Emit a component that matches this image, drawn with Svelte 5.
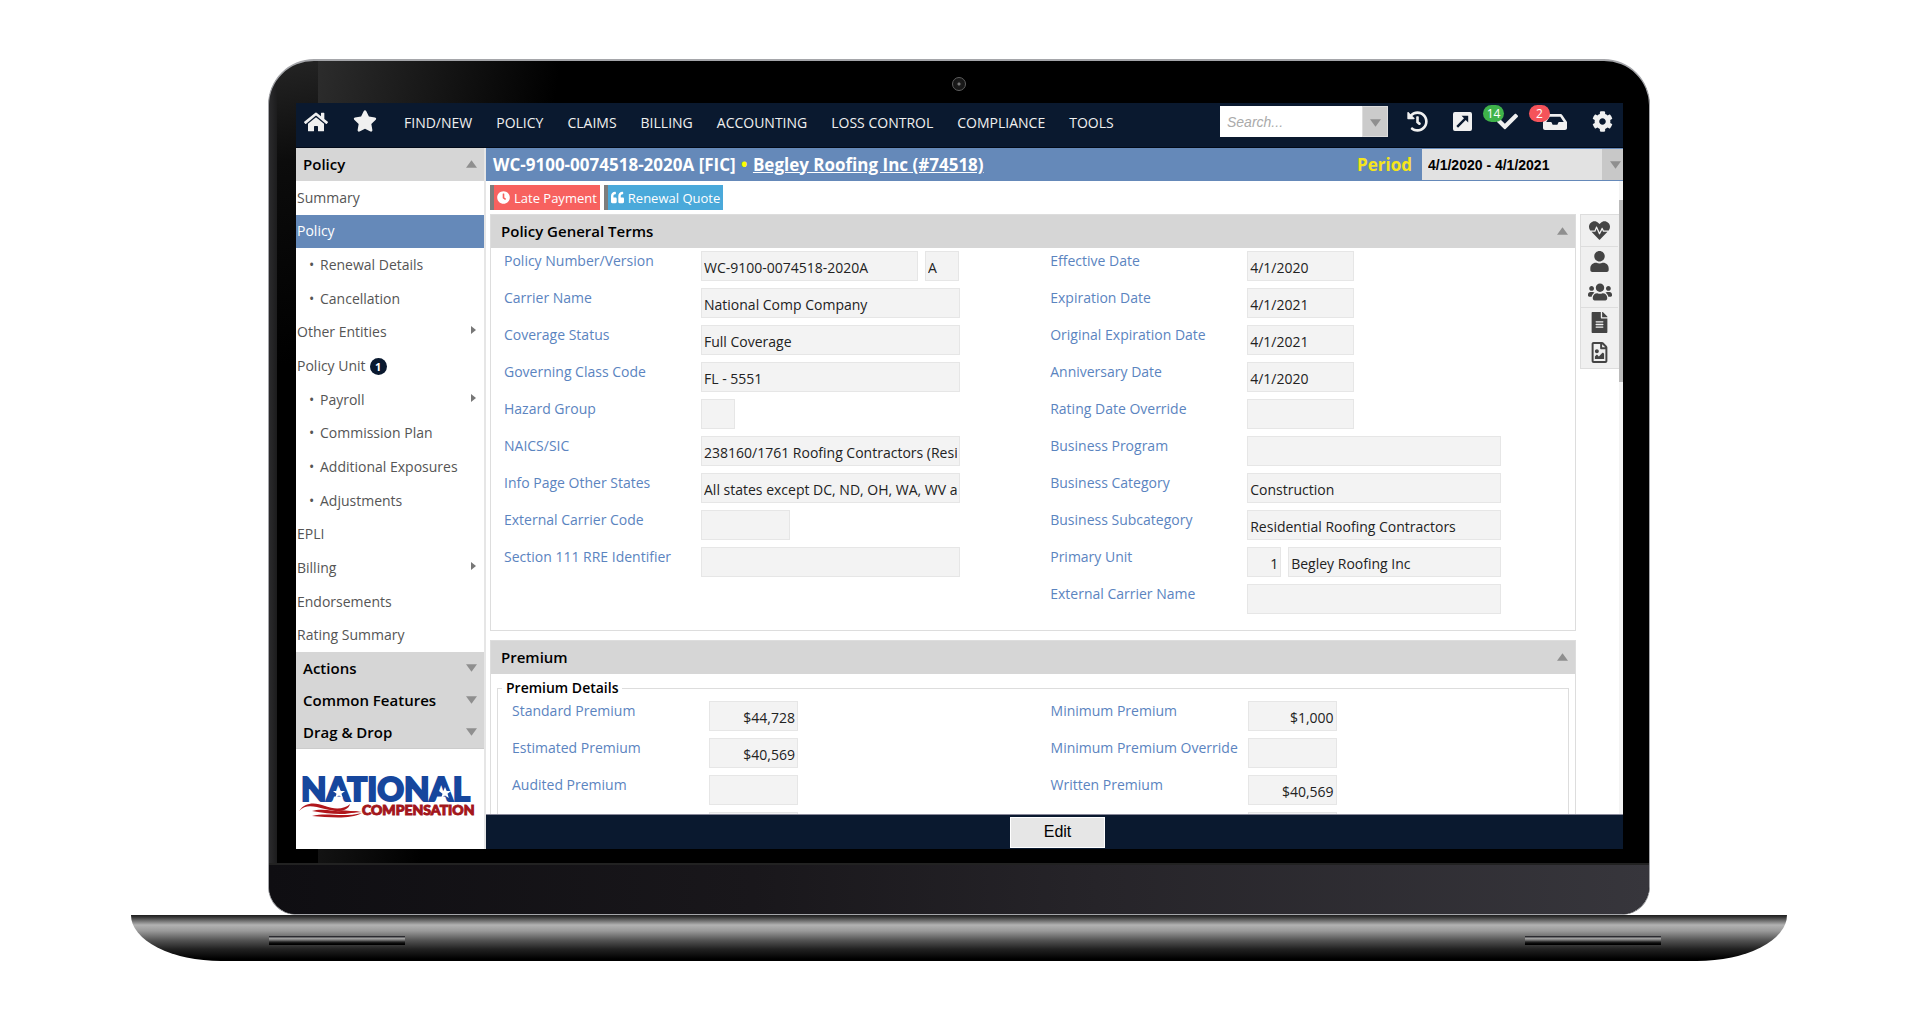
<script>
  const icons = {
    home: ['0 0 576 512', 'M280.37 148.26L96 300.11V464a16 16 0 0 0 16 16l112.06-.29a16 16 0 0 0 15.92-16V368a16 16 0 0 1 16-16h64a16 16 0 0 1 16 16v95.64a16 16 0 0 0 16 16.05L464 480a16 16 0 0 0 16-16V300L295.67 148.26a12.19 12.19 0 0 0-15.3 0zM571.6 251.47L488 182.56V44.05a12 12 0 0 0-12-12h-56a12 12 0 0 0-12 12v72.61L318.47 43a48 48 0 0 0-61 0L4.34 251.47a12 12 0 0 0-1.6 16.9l25.5 31A12 12 0 0 0 45.15 301l235.22-193.74a12.19 12.19 0 0 1 15.3 0L530.9 301a12 12 0 0 0 16.9-1.6l25.5-31a12 12 0 0 0-1.7-16.93z'],
    star: ['0 0 576 512', 'M259.3 17.8L194 150.2 47.9 171.5c-26.2 3.8-36.7 36.1-17.7 54.6l105.7 103-25 145.5c-4.5 26.3 23.2 46 46.4 33.7L288 439.6l130.7 68.7c23.2 12.2 50.9-7.4 46.4-33.7l-25-145.5 105.7-103c19-18.5 8.5-50.8-17.7-54.6L382 150.2 316.7 17.8c-11.7-23.6-45.6-23.9-57.4 0z'],
    history: ['0 0 512 512', 'M504 255.531c.253 136.64-111.18 248.372-247.82 248.468-59.015.042-113.223-20.53-155.822-54.911-11.077-8.94-11.905-25.541-1.839-35.607l11.267-11.267c8.609-8.609 22.353-9.551 31.891-1.984C173.062 425.135 212.781 440 256 440c101.705 0 184-82.311 184-184 0-101.705-82.311-184-184-184-48.814 0-93.149 18.969-126.068 49.932l50.754 50.754c10.08 10.08 2.941 27.314-11.313 27.314H24c-8.837 0-16-7.163-16-16V38.627c0-14.254 17.234-21.393 27.314-11.314l49.372 49.372C129.209 34.136 189.552 8 256 8c136.81 0 247.747 110.78 248 247.531zm-180.912 78.784l9.823-12.63c8.138-10.463 6.253-25.542-4.21-33.679L288 256.349V152c0-13.255-10.745-24-24-24h-16c-13.255 0-24 10.745-24 24v135.651l65.409 50.874c10.463 8.137 25.541 6.253 33.679-4.21z'],
    external: ['0 0 20 20', 'M2 0h16a2 2 0 0 1 2 2v16a2 2 0 0 1-2 2H2a2 2 0 0 1-2-2V2a2 2 0 0 1 2-2zM9 4l2.600 2.600L3.500 14.700l1.800 1.800L13.400 8.400 16 11V4z'],
    check: ['0 0 512 512', 'M173.898 439.404l-166.4-166.4c-9.997-9.997-9.997-26.206 0-36.204l36.203-36.204c9.997-9.998 26.207-9.998 36.204 0L192 312.69 432.095 72.596c9.997-9.997 26.207-9.997 36.204 0l36.203 36.204c9.997 9.997 9.997 26.206 0 36.204l-294.4 294.401c-9.998 9.997-26.207 9.997-36.204-.001z'],
    inbox: ['0 0 576 512', 'M567.938 243.908L462.25 85.374A48.003 48.003 0 0 0 422.311 64H153.689a48 48 0 0 0-39.938 21.374L8.062 243.908A47.994 47.994 0 0 0 0 270.533V400c0 26.51 21.49 48 48 48h480c26.51 0 48-21.49 48-48V270.533a47.994 47.994 0 0 0-8.062-26.625zM162.252 128h251.497l85.333 128H376l-32 64H232l-32-64H76.918l85.334-128z'],
    cog: ['0 0 512 512', 'M487.4 315.7l-42.6-24.6c4.3-23.2 4.3-47 0-70.2l42.6-24.6c4.9-2.8 7.1-8.6 5.5-14-11.1-35.6-30-67.8-54.7-94.6-3.8-4.1-10-5.1-14.8-2.3L380.8 110c-17.9-15.4-38.5-27.3-60.8-35.1V25.8c0-5.6-3.9-10.5-9.4-11.7-36.7-8.2-74.3-7.8-109.2 0-5.5 1.2-9.4 6.1-9.4 11.7V75c-22.2 7.900-42.8 19.800-60.800 35.100L88.700 85.500c-4.900-2.800-11-1.900-14.800 2.300-24.700 26.700-43.600 58.900-54.700 94.600-1.700 5.400.600 11.200 5.500 14L67.300 221c-4.300 23.200-4.300 47 0 70.200l-42.600 24.600c-4.900 2.800-7.100 8.600-5.500 14 11.100 35.600 30 67.800 54.700 94.600 3.800 4.100 10 5.100 14.800 2.300l42.600-24.600c17.900 15.400 38.500 27.300 60.800 35.100v49.200c0 5.600 3.900 10.500 9.400 11.700 36.700 8.200 74.300 7.800 109.200 0 5.500-1.200 9.400-6.100 9.400-11.700v-49.200c22.200-7.900 42.800-19.800 60.800-35.100l42.600 24.600c4.900 2.800 11 1.900 14.800-2.300 24.700-26.700 43.600-58.900 54.700-94.600 1.500-5.500-.7-11.300-5.600-14.100zM256 336c-44.100 0-80-35.900-80-80s35.900-80 80-80 80 35.900 80 80-35.900 80-80 80z'],
    clock: ['0 0 512 512', 'M256,8C119,8,8,119,8,256S119,504,256,504,504,393,504,256,393,8,256,8Zm92.49,313h0l-20,25a16,16,0,0,1-22.49,2.5h0l-67-49.72a40,40,0,0,1-15-31.23V112a16,16,0,0,1,16-16h32a16,16,0,0,1,16,16V256l58,42.5A16,16,0,0,1,348.49,321Z'],
    quote: ['0 0 512 512', 'M464 256h-80v-64c0-35.300 28.700-64 64-64h8c13.300 0 24-10.700 24-24V56c0-13.300-10.700-24-24-24h-8c-88.400 0-160 71.600-160 160v240c0 26.500 21.500 48 48 48h128c26.500 0 48-21.500 48-48V304c0-26.500-21.500-48-48-48zm-288 0H96v-64c0-35.300 28.700-64 64-64h8c13.300 0 24-10.700 24-24V56c0-13.300-10.700-24-24-24h-8C71.600 32 0 103.600 0 192v240c0 26.500 21.500 48 48 48h128c26.500 0 48-21.500 48-48V304c0-26.500-21.500-48-48-48z'],
    heartbeat: ['0 0 512 512', 'M320.2 243.8l-49.7 99.4c-6 12.1-23.4 11.7-28.9-.6l-56.9-126.3-30 71.7H60.6l182.5 186.5c7.1 7.3 18.6 7.3 25.7 0L451.4 288H342.3l-22.1-44.2zM473.7 73.9l-2.4-2.5c-51.5-52.6-135.8-52.6-187.4 0L256 100l-27.9-28.5c-51.5-52.7-135.9-52.7-187.4 0l-2.4 2.4C-10.4 123.7-12.5 203 31 256h102.4l35.9-86.2c5.4-12.9 23.6-13.1 29.4-.4l58.2 129.3 49-97.9c5.9-11.8 22.7-11.8 28.6 0l27.6 55.2H481c43.5-53 41.4-132.3-7.3-182.1z'],
    user: ['0 0 448 512', 'M224 256c70.7 0 128-57.3 128-128S294.7 0 224 0 96 57.3 96 128s57.3 128 128 128zm89.6 32h-16.7c-22.2 10.2-46.9 16-72.9 16s-50.6-5.8-72.9-16h-16.700C60.200 288 0 348.200 0 422.400V464c0 26.500 21.500 48 48 48h352c26.500 0 48-21.500 48-48v-41.600c0-74.200-60.200-134.400-134.400-134.400z'],
    users: ['0 0 640 512', 'M96 224c35.3 0 64-28.7 64-64s-28.7-64-64-64-64 28.7-64 64 28.7 64 64 64zm448 0c35.3 0 64-28.7 64-64s-28.7-64-64-64-64 28.7-64 64 28.7 64 64 64zm32 32h-64c-17.6 0-33.5 7.1-45.1 18.6 40.3 22.1 68.9 62 75.1 109.4h66c17.7 0 32-14.3 32-32v-32c0-35.3-28.7-64-64-64zm-256 0c61.9 0 112-50.1 112-112S381.9 32 320 32 208 82.1 208 144s50.1 112 112 112zm76.8 32h-8.3c-20.8 10-43.9 16-68.5 16s-47.6-6-68.5-16h-8.300C179.600 288 128 339.600 128 403.200V432c0 26.500 21.500 48 48 48h288c26.500 0 48-21.500 48-48v-28.800c0-63.600-51.600-115.200-115.200-115.200zm-223.700-13.400C161.500 263.100 145.600 256 128 256H64c-35.300 0-64 28.700-64 64v32c0 17.700 14.300 32 32 32h65.900c6.300-47.400 34.900-87.300 75.200-109.400z'],
    file: ['0 0 384 512', 'M224 136V0H24C10.7 0 0 10.7 0 24v464c0 13.3 10.7 24 24 24h336c13.3 0 24-10.7 24-24V160H248c-13.2 0-24-10.8-24-24zm64 236c0 6.6-5.4 12-12 12H108c-6.6 0-12-5.4-12-12v-8c0-6.6 5.4-12 12-12h168c6.6 0 12 5.4 12 12v8zm0-64c0 6.6-5.4 12-12 12H108c-6.6 0-12-5.4-12-12v-8c0-6.6 5.4-12 12-12h168c6.6 0 12 5.4 12 12v8zm0-72v8c0 6.6-5.4 12-12 12H108c-6.600 0-12-5.400-12-12v-8c0-6.600 5.400-12 12-12h168c6.600 0 12 5.400 12 12zm96-114.100v6.100H256V0h6.100c6.400 0 12.500 2.500 17 7l97.900 98c4.500 4.500 7 10.600 7 16.900z'],
    image: ['0 0 384 512', 'M369.9 97.9L286 14C277 5 264.8-.1 252.1-.1H48C21.5 0 0 21.5 0 48v416c0 26.5 21.5 48 48 48h288c26.5 0 48-21.5 48-48V131.9c0-12.7-5.1-25-14.1-34zM332.1 128H256V51.9l76.1 76.1zM48 464V48h160v104c0 13.3 10.7 24 24 24h104v288H48zm32-48h224V288l-23.5-23.5c-4.7-4.7-12.3-4.7-17 0L176 352l-39.5-39.5c-4.7-4.7-12.3-4.7-17 0L80 352v64zm48-240c-26.5 0-48 21.5-48 48s21.5 48 48 48 48-21.5 48-48-21.5-48-48-48z']
  };

  const navItems = ['FIND/NEW', 'POLICY', 'CLAIMS', 'BILLING', 'ACCOUNTING', 'LOSS CONTROL', 'COMPLIANCE', 'TOOLS'];

  const menu = [
    { label: 'Summary' },
    { label: 'Policy', active: true },
    { label: 'Renewal Details', sub: true },
    { label: 'Cancellation', sub: true },
    { label: 'Other Entities', more: true },
    { label: 'Policy Unit', count: 1 },
    { label: 'Payroll', sub: true, more: true },
    { label: 'Commission Plan', sub: true },
    { label: 'Additional Exposures', sub: true },
    { label: 'Adjustments', sub: true },
    { label: 'EPLI' },
    { label: 'Billing', more: true },
    { label: 'Endorsements' },
    { label: 'Rating Summary' }
  ];

  const closedGroups = ['Actions', 'Common Features', 'Drag & Drop'];

  // each field: label, then [size class, value] per box
  const general = [
    [
      ['Policy Number/Version', ['number', 'WC-9100-0074518-2020A'], ['tiny', 'A']],
      ['Carrier Name', ['wide', 'National Comp Company']],
      ['Coverage Status', ['wide', 'Full Coverage']],
      ['Governing Class Code', ['wide', 'FL - 5551']],
      ['Hazard Group', ['tiny', '']],
      ['NAICS/SIC', ['wide', '238160/1761 Roofing Contractors (Residential)']],
      ['Info Page Other States', ['wide', 'All states except DC, ND, OH, WA, WV and WY']],
      ['External Carrier Code', ['short', '']],
      ['Section 111 RRE Identifier', ['wide', '']]
    ],
    [
      ['Effective Date', ['date', '4/1/2020']],
      ['Expiration Date', ['date', '4/1/2021']],
      ['Original Expiration Date', ['date', '4/1/2021']],
      ['Anniversary Date', ['date', '4/1/2020']],
      ['Rating Date Override', ['date', '']],
      ['Business Program', ['long', '']],
      ['Business Category', ['long', 'Construction']],
      ['Business Subcategory', ['long', 'Residential Roofing Contractors']],
      ['Primary Unit', ['tiny right', '1'], ['unit', 'Begley Roofing Inc']],
      ['External Carrier Name', ['long', '']]
    ]
  ];

  const premium = [
    [
      ['Standard Premium', ['short right', '$44,728']],
      ['Estimated Premium', ['short right', '$40,569']],
      ['Audited Premium', ['short right', '']],
      ['', ['short right', '']]
    ],
    [
      ['Minimum Premium', ['short right', '$1,000']],
      ['Minimum Premium Override', ['short right', '']],
      ['Written Premium', ['short right', '$40,569']],
      ['', ['short right', '']]
    ]
  ];

  let search = '';
  let period = '4/1/2020 - 4/1/2021';
</script>

{#snippet icon(name, size)}
  <svg class="icon {size}" viewBox={icons[name][0]} aria-hidden="true"><path fill-rule="evenodd" d={icons[name][1]} /></svg>
{/snippet}

{#snippet triangle(dir)}
  <svg class="triangle" viewBox="0 0 12 8" aria-hidden="true"><path d={dir === 'up' ? 'M6 0l6 8H0z' : 'M0 0h12L6 8z'} /></svg>
{/snippet}

{#snippet fields(columns, group)}
  <div class="columns">
    {#each columns as column, c}
      <div class="column">
        {#each column as [label, ...boxes], r}
          <div class="field">
            <label for="{group}-{c}-{r}-0">{label}</label>
            {#each boxes as [size, value], b}
              <input id="{group}-{c}-{r}-{b}" class={size} type="text" readonly {value} aria-label={b ? label : null} />
            {/each}
          </div>
        {/each}
      </div>
    {/each}
  </div>
{/snippet}

<div class="page">
  <div class="lid">
    <div class="camera"></div>
    <div class="screen">
      <header class="nav">
        <a class="home" href="#home" aria-label="Home">{@render icon('home', 'big')}</a>
        <a class="favorites" href="#favorites" aria-label="Favorites">{@render icon('star', 'big')}</a>
        <nav>
          {#each navItems as item}
            <a href="#{item}">{item}</a>
          {/each}
        </nav>
        <div class="search">
          <input type="text" placeholder="Search..." aria-label="Search" bind:value={search} />
          <button aria-label="Search options">{@render triangle('down')}</button>
        </div>
        <div class="tools">
          <button aria-label="History">{@render icon('history', 'medium')}</button>
          <button aria-label="Open in new window">{@render icon('external', 'small')}</button>
          <button aria-label="Tasks">{@render icon('check', 'medium')}<span class="badge green">14</span></button>
          <button aria-label="Inbox">{@render icon('inbox', 'big')}<span class="badge red">2</span></button>
          <button aria-label="Settings">{@render icon('cog', 'medium')}</button>
        </div>
      </header>

      <div class="body">
        <aside>
          <button class="group">Policy {@render triangle('up')}</button>
          <ul>
            {#each menu as item}
              <li>
                <a href="#{item.label}" class:active={item.active} class:sub={item.sub}>
                  {#if item.sub}<span class="bullet">•</span>{/if}
                  <span>{item.label}</span>
                  {#if item.count}<span class="count">{item.count}</span>{/if}
                  {#if item.more}
                    <svg class="more" viewBox="0 0 5 8" aria-hidden="true"><path d="M0 0l5 4-5 4z" /></svg>
                  {/if}
                </a>
              </li>
            {/each}
          </ul>
          <div class="closed">
            {#each closedGroups as name}
              <button class="group">{name} {@render triangle('down')}</button>
            {/each}
          </div>
          <div class="logo">
            <svg viewBox="0 -15 180 65" role="img" aria-label="National Compensation">
              <text class="national" x="3" y="27">NATIONAL</text>
              <text class="compensation" x="64" y="41">COMPENSATION</text>
              <path class="star" d="M41 13l1.700 4h4.300l-3.500 2.700 1.300 4.300-3.800-2.600-3.800 2.600 1.300-4.300-3.500-2.700h4.300z" />
              <path class="star" d="M147 13l1.700 4h4.300l-3.500 2.700 1.300 4.300-3.800-2.600-3.800 2.600 1.300-4.300-3.500-2.700h4.300z" />
              <path class="flag" d="M1 37c6-9 16-9 26-5s20 3 25-2c-2 8-13 8-25 5s-19-5-26 2z" />
              <path class="flag" d="M14 37c13-4 26 3 47 0-14 5-28 3-47 0z" />
              <path class="flag" d="M14 42c16-4 29 2 50-3-13 7-34 4-50 3zM25 32c13 5 22 4 39 6-15 2-29 0-39-6z" />
            </svg>
          </div>
        </aside>

        <main>
          <div class="title">
            <h1>WC-9100-0074518-2020A [FIC] <span>•</span> <a href="#insured">Begley Roofing Inc (#74518)</a></h1>
            <label for="period">Period</label>
            <div class="period">
              <select id="period" bind:value={period}>
                <option>4/1/2020 - 4/1/2021</option>
              </select>
              <span class="arrow">{@render triangle('down')}</span>
            </div>
          </div>

          <div class="content">
            <div class="sections">
              <div class="pills">
                <button class="late">{@render icon('clock', 'pill')}Late Payment</button>
                <button class="quote">{@render icon('quote', 'pill')}Renewal Quote</button>
              </div>
              <section>
                <h2>Policy General Terms {@render triangle('up')}</h2>
                {@render fields(general, 'general')}
              </section>
              <section>
                <h2>Premium {@render triangle('up')}</h2>
                <fieldset>
                  <legend>Premium Details</legend>
                  {@render fields(premium, 'premium')}
                </fieldset>
              </section>
            </div>
            <div class="rail">
              <button aria-label="Health">{@render icon('heartbeat', 'medium')}</button>
              <button class="split" aria-label="Contact">{@render icon('user', 'medium')}</button>
              <button aria-label="Contacts">{@render icon('users', 'big')}</button>
              <button class="split" aria-label="Notes">{@render icon('file', 'medium')}</button>
              <button aria-label="Images">{@render icon('image', 'medium')}</button>
            </div>
            <div class="scrollbar"><div class="thumb"></div></div>
          </div>

          <footer>
            <button>Edit</button>
          </footer>
        </main>
      </div>
    </div>
    <div class="chin"></div>
  </div>
  <div class="base">
    <span class="foot"></span>
    <span class="foot"></span>
  </div>
</div>

<style>
  :global(body) {
    background: #fff;
  }

  * {
    box-sizing: border-box;
  }

  button {
    padding: 0;
    border: 0;
    background: none;
    color: inherit;
    font: inherit;
    cursor: pointer;
  }

  a {
    color: inherit;
    text-decoration: none;
  }

  .page {
    padding: 59px 133px 60px 131px;
    font-family: "Open Sans", "Noto Sans", sans-serif;
    font-size: 14px;
    line-height: 20px;
    color: #555;
  }

  /* laptop */
  .lid {
    position: relative;
    margin: 0 137px;
    border: 1px solid #a5a6aa;
    border-top-width: 2px;
    border-radius: 46px 46px 28px 28px;
    background:
      linear-gradient(90deg, #2b2b2d, #1c1c1d) 0 0 / 8px 100% no-repeat,
      linear-gradient(170deg, #242424, #0c0c0c 100px, #000 300px) 8px 0 / 41px 100% no-repeat,
      linear-gradient(100deg, #2c2c2c, #000 240px) 49px 0 / 100% 100% no-repeat,
      #000;
    overflow: hidden;
  }

  .camera {
    position: absolute;
    top: 16px;
    left: 50%;
    width: 14px;
    height: 14px;
    margin-left: -7px;
    border: 1px solid #606060;
    border-radius: 50%;
    background: radial-gradient(#777 1px, #1b1b1b 2px, #111);
  }

  .screen {
    display: flex;
    flex-direction: column;
    aspect-ratio: 1327 / 746;
    margin: 42px 26px 14px 27px;
    background: #fff;
    overflow: hidden;
  }

  .chin {
    height: 51px;
    border-top: 2px solid #222;
    background: linear-gradient(90deg, #0f0e12, #19171b 35%, #262429 60%, #37363c);
  }

  .base {
    display: flex;
    justify-content: space-between;
    padding: 21px 126px 16px 138px;
    border-radius: 0 0 90px 90px / 0 0 46px 46px;
    background: linear-gradient(#1c1c1c, #333 2px, #b2b2b2 10px, #999 16px, #555 25px, #222 34px, #000 44px);
  }

  .foot {
    width: 136px;
    height: 9px;
    background: linear-gradient(#2b2b30 1px, #aaa 2px, #777 4px, #222 6px, #000 8px);
  }

  /* icons */
  .icon {
    display: block;
    fill: currentColor;
  }

  .icon.big { width: 24px; height: 22px; }
  .icon.medium { width: 21px; height: 21px; }
  .icon.small { width: 19px; height: 19px; }
  .icon.pill { width: 13px; height: 13px; }

  .triangle {
    width: 11px;
    height: 8px;
    fill: #8f8f8f;
  }

  /* top bar */
  .nav {
    display: flex;
    flex: none;
    align-items: center;
    height: 45px;
    padding: 0 10px 7px 8px;
    border-bottom: 1px solid #020a18;
    background: #0a192f;
    color: #f0f0f0;
  }

  .favorites {
    margin: 0 27px 2px 25px;
  }

  nav {
    display: flex;
    gap: 24px;
    flex: 1;
    padding-top: 2px;
    white-space: nowrap;
  }

  .search {
    display: flex;
    width: 168px;
    height: 31px;
    background: #fff;
  }

  .search input {
    flex: 1;
    min-width: 0;
    padding: 0 7px;
    border: 0;
    background: none;
    font: italic 14px "Liberation Sans", Arial, sans-serif;
  }

  .search input::placeholder {
    color: #aaa;
  }

  .search button {
    width: 26px;
    border: 1px solid #ddd;
    background: #cbcbcb;
  }

  .tools {
    display: flex;
    align-items: center;
    gap: 25px;
    margin-left: 19px;
  }

  .tools button {
    position: relative;
  }

  .badge {
    position: absolute;
    top: -6px;
    left: -14px;
    width: 21px;
    border-radius: 9px;
    font-size: 12px;
    line-height: 17px;
    color: #fff;
  }

  .badge.green { background: #3fb34a; }
  .badge.red { background: #f5535a; }

  /* left menu */
  .body {
    display: flex;
    flex: 1;
    min-height: 0;
  }

  aside {
    display: flex;
    flex-direction: column;
    width: 190px;
    border-right: 2px solid #e6e6e6;
  }

  .group {
    display: flex;
    align-items: center;
    justify-content: space-between;
    flex: none;
    width: 100%;
    height: 33px;
    padding: 0 7px 1px;
    background: #d6d6d6;
    color: #000;
    font-size: 15px;
    font-weight: 600;
  }

  .closed .group {
    height: 32px;
  }

  ul {
    display: flex;
    flex-direction: column;
    flex: 1;
    margin: 0;
    padding: 0;
    list-style: none;
  }

  li {
    display: flex;
    flex: 1;
  }

  li a {
    display: flex;
    align-items: center;
    flex: 1;
    padding: 0 8px 0 1px;
  }

  li a.active {
    background: #6589b9;
    color: #fff;
  }

  li a.sub {
    padding-left: 13px;
  }

  .bullet {
    width: 11px;
  }

  .count {
    width: 17px;
    height: 17px;
    margin-left: 4px;
    border-radius: 50%;
    background: #0a192f;
    color: #fff;
    font-size: 11px;
    font-weight: 700;
    line-height: 17px;
    text-align: center;
  }

  .more {
    width: 5px;
    height: 8px;
    margin: 0 0 4px auto;
    fill: #777;
  }

  .closed {
    border-bottom: 1px solid #ccc;
  }

  .logo {
    height: 100px;
    padding: 10px 6px 0 2px;
  }

  .logo svg {
    display: block;
    width: 100%;
  }

  .logo text {
    font-family: Lato, sans-serif;
    font-weight: 900;
  }

  .national {
    font-size: 33px;
    fill: #16469d;
    stroke: #16469d;
    stroke-width: 2px;
  }

  .compensation {
    font-size: 14px;
    fill: #a3161b;
    stroke: #a3161b;
  }

  .star { fill: #fff; }
  .flag { fill: #b0161b; }

  /* policy area */
  main {
    display: flex;
    flex-direction: column;
    flex: 1;
    min-width: 0;
  }

  .title {
    display: flex;
    align-items: center;
    flex: none;
    height: 33px;
    padding-left: 7px;
    background: #6589b9;
  }

  h1 {
    flex: 1;
    margin: 0;
    color: #fff;
    font-size: 17px;
    font-weight: 700;
  }

  h1 span {
    margin: 0 1px;
    color: #ff0;
  }

  h1 a {
    text-decoration: underline;
  }

  .title label {
    margin-right: 10px;
    color: #f5e51b;
    font-size: 17px;
    font-weight: 700;
  }

  .period {
    display: flex;
    width: 201px;
    height: 31px;
    background: #e2e2e2;
  }

  select {
    flex: 1;
    min-width: 0;
    padding: 0 6px;
    border: 0;
    background: none;
    color: #000;
    font: bold 14px "Liberation Sans", Arial, sans-serif;
    appearance: none;
  }

  .arrow {
    display: flex;
    align-items: center;
    justify-content: flex-end;
    width: 21px;
    padding-right: 2px;
    background: #c8c8c8;
  }

  .content {
    display: flex;
    flex: 1;
    align-items: flex-start;
    min-height: 0;
    padding-left: 4px;
    overflow: hidden;
  }

  .sections {
    flex: 1;
    min-width: 0;
  }

  .pills {
    display: flex;
    gap: 4px;
    padding: 4px 0;
  }

  .pills button {
    display: flex;
    align-items: center;
    gap: 4px;
    height: 25px;
    padding: 0 3px;
    border-left: 4px solid #7d7d7d;
    color: #fff;
    font-size: 13px;
  }

  .late { background: #f7615f; }
  .quote { background: #4aa9da; }

  section {
    margin-bottom: 9px;
    border: 1px solid #ddd;
  }

  h2 {
    display: flex;
    align-items: center;
    justify-content: space-between;
    height: 33px;
    margin: 0;
    padding: 0 7px 1px 10px;
    background: #d6d6d6;
    color: #000;
    font-size: 15px;
    font-weight: 600;
  }

  .columns {
    display: grid;
    grid-template-columns: 51% 49%;
    padding: 3px 0 9px 13px;
  }

  .field {
    display: flex;
    gap: 7px;
    height: 37px;
  }

  .field label {
    width: 190px;
    color: #5b84bf;
  }

  .field input {
    width: 254px;
    height: 30px;
    padding: 2px 2px 0;
    border: 1px solid #e6e6e6;
    background: #f3f3f3;
    color: #222;
    font: inherit;
  }

  .field .number { width: 217px; }
  .field .unit { width: 213px; }
  .field .wide { width: 259px; }
  .field .date { width: 107px; }
  .field .short { width: 89px; }
  .field .tiny { width: 34px; }
  .field .right { text-align: right; }

  fieldset {
    min-width: 0;
    margin: 4px 6px;
    padding: 0;
    border: 1px solid #ddd;
  }

  fieldset .columns {
    padding-left: 14px;
  }

  legend {
    margin-left: 4px;
    padding: 0 4px;
    color: #000;
    font-weight: 600;
  }

  .rail {
    width: 39px;
    margin: 33px 0 0 4px;
    padding: 0 1px 0 0;
    border: 1px solid #ddd;
    border-right: 0;
    background: #f0f0f0;
    color: #444;
  }

  .rail button {
    display: flex;
    align-items: center;
    justify-content: center;
    width: 100%;
    height: 31px;
  }

  .rail .split {
    height: 30px;
    border-top: 1px solid #ddd;
  }

  .scrollbar {
    align-self: stretch;
    width: 4px;
    padding-top: 19px;
    background: #f4f4f4;
  }

  .thumb {
    height: 182px;
    background: #bbb;
  }

  footer {
    display: flex;
    align-items: center;
    justify-content: center;
    flex: none;
    height: 35px;
    padding-left: 6px;
    border-top: 1px solid #889;
    background: #0a192f;
  }

  footer button {
    width: 95px;
    height: 31px;
    border: 1px solid #fff;
    background: #e6e6e6;
    color: #000;
    font: 16px "Liberation Sans", Arial, sans-serif;
  }
</style>
